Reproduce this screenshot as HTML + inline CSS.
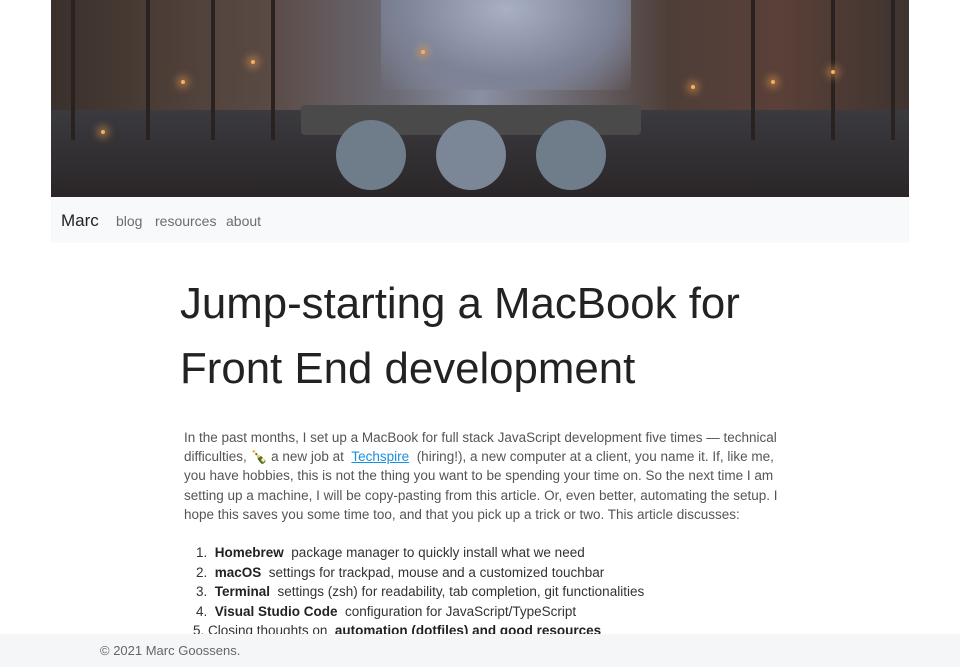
<!DOCTYPE html>
<html><head><meta charset="utf-8"><style>
body{margin:0;width:960px;height:667px;overflow:hidden;background:#fff;font-family:"Liberation Sans",sans-serif;position:relative}
.hero{position:absolute;left:51px;top:0;width:858px;height:197px;overflow:hidden;
background:linear-gradient(90deg,#3a302c 0%,#4b3d36 12%,#5a4a44 25%,#6b6a74 40%,#8a90a3 50%,#6e6a72 60%,#4e3e38 72%,#5a4038 85%,#3e3430 100%)}
.hero .sky{position:absolute;left:330px;top:0;width:250px;height:90px;background:radial-gradient(ellipse at 50% 10%,#a9b0c4,#7d8397 60%,transparent 100%)}
.hero .water{position:absolute;left:0;right:0;top:110px;bottom:0;background:linear-gradient(180deg,#3b3a3f,#2a2628)}
.hero .bridge{position:absolute;left:250px;top:105px;width:340px;height:30px;background:#4a4a4a;border-radius:4px}
.hero .arch{position:absolute;top:120px;width:70px;height:70px;border-radius:50%;background:#6f7c8a}
.hero .t{position:absolute;top:0;width:4px;height:140px;background:#2a2220}
.hero .l{position:absolute;border-radius:50%;background:#f4b060;box-shadow:0 0 8px 4px rgba(240,160,80,.5);width:4px;height:4px}
.nav{position:absolute;left:51px;top:197px;width:858px;height:46px;background:#f8f9fa}
.nav .b{position:absolute;left:10px;top:14px;font-size:17px;color:#222}
.nav a{position:absolute;top:16px;font-size:14px;color:#6c6c6c;text-decoration:none}
h1{position:absolute;left:180px;top:271px;margin:0;font-weight:400;font-size:43.8px;line-height:65px;color:#222;width:640px}
p{position:absolute;left:184px;top:428px;margin:0;width:595px;font-size:13.5px;line-height:19.2px;color:#555}
p a{color:#1a8fe0;text-decoration:underline}
ol{position:absolute;left:196px;top:543px;margin:0;padding:0;list-style:none;font-size:13.5px;line-height:19.6px;color:#333}
b{color:#222}
.f{position:absolute;left:0;top:634px;width:960px;height:33px;background:#f5f6f7}
.f span{position:absolute;left:100px;top:9px;font-size:13px;color:#666}
</style></head><body>
<div class="hero"><div class="sky"></div><div class="water"></div><div class="bridge"></div>
<div class="t" style="left:20px"></div><div class="t" style="left:95px"></div><div class="t" style="left:160px"></div><div class="t" style="left:220px"></div><div class="t" style="left:700px"></div><div class="t" style="left:780px"></div><div class="t" style="left:840px"></div>
<div class="arch" style="left:285px"></div><div class="arch" style="left:385px;background:#7b8796"></div><div class="arch" style="left:485px"></div>
<div class="l" style="left:50px;top:130px"></div><div class="l" style="left:130px;top:80px"></div><div class="l" style="left:370px;top:50px"></div><div class="l" style="left:640px;top:85px"></div><div class="l" style="left:720px;top:80px"></div><div class="l" style="left:780px;top:70px"></div><div class="l" style="left:200px;top:60px"></div>
</div>
<div class="nav"><span class="b">Marc</span><a style="left:65px">blog</a><a style="left:104px">resources</a><a style="left:175px">about</a></div>
<h1>Jump-starting a MacBook for Front End development</h1>
<p>In the past months, I set up a MacBook for full stack JavaScript development five times — technical difficulties, 🍾 a new job at &nbsp;<a>Techspire</a>&nbsp; (hiring!), a new computer at a client, you name it. If, like me, you have hobbies, this is not the thing you want to be spending your time on. So the next time I am setting up a machine, I will be copy-pasting from this article. Or, even better, automating the setup. I hope this saves you some time too, and that you pick up a trick or two. This article discusses:</p>
<ol><li>1.&nbsp; <b>Homebrew</b>&nbsp; package manager to quickly install what we need</li>
<li>2.&nbsp; <b>macOS</b>&nbsp; settings for trackpad, mouse and a customized touchbar</li>
<li>3.&nbsp; <b>Terminal</b>&nbsp; settings (zsh) for readability, tab completion, git functionalities</li>
<li>4.&nbsp; <b>Visual Studio Code</b>&nbsp; configuration for JavaScript/TypeScript</li>
<li style="margin-left:-3px">5. Closing thoughts on &nbsp;<b>automation (dotfiles) and good resources</b></li></ol>
<div class="f"><span>© 2021 Marc Goossens.</span></div>
</body></html>
